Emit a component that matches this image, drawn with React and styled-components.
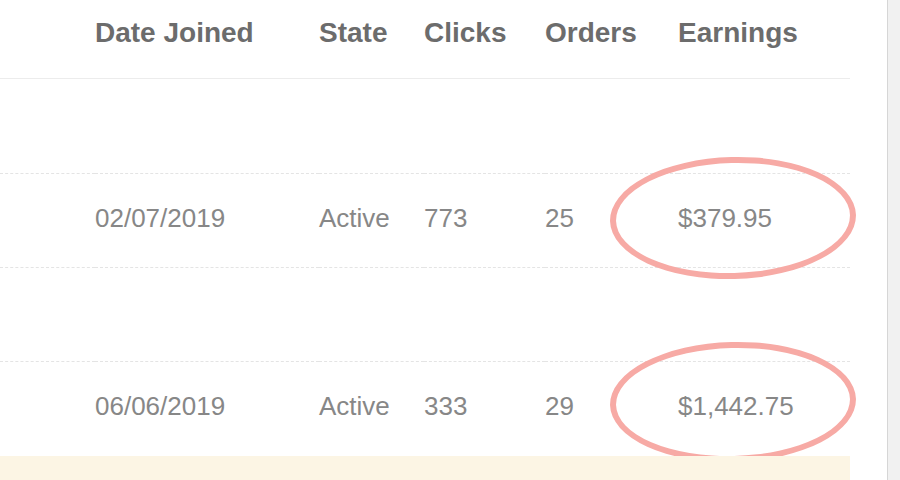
import React from "react";
import styled, { createGlobalStyle } from "styled-components";

const Global = createGlobalStyle`
  html, body { margin: 0; padding: 0; background: #fff; }
  body { font-family: "Liberation Sans", Arial, sans-serif; overflow: hidden; }
`;

const Page = styled.div`
  display: flex;
  width: 900px;
  height: 480px;
  overflow: hidden;
`;

const Main = styled.div`
  flex: 1;
  padding-right: 37px;
  background: #fff;
`;

const Scrollbar = styled.div`
  width: 12px;
  border-left: 1px solid #d6d6d6;
  background: #f1f1f1;
`;

const Table = styled.div`
  width: 850px;
  display: grid;
  grid-template-columns: 95px 224px 105px 121px 133px 1fr;
`;

const HeadCell = styled.div`
  box-sizing: border-box;
  height: 79px;
  padding-top: 17px;
  border-bottom: 1px solid #ececec;
  font-size: 28px;
  line-height: 32px;
  font-weight: 700;
  color: #6c6c6c;
  white-space: nowrap;
`;

const Cell = styled.div`
  position: relative;
  box-sizing: border-box;
  height: ${(p) => p.$h}px;
  padding-top: 29px;
  font-size: 26px;
  line-height: 30px;
  color: #878787;
  white-space: nowrap;
  border-bottom: ${(p) => (p.$last ? "none" : "1px dashed #e4e4e4")};
  background: ${(p) => (p.$hl ? "#fcf5e4" : "transparent")};
`;

const Circle = styled.span`
  position: absolute;
  left: -68px;
  top: ${(p) => p.$top}px;
  width: 246px;
  height: ${(p) => p.$height}px;
  box-sizing: border-box;
  border: 6px solid #f7aaa5;
  border-radius: 50%;
  transform: rotate(-1.5deg);
  pointer-events: none;
`;

const headers = ["", "Date Joined", "State", "Clicks", "Orders", "Earnings"];

const rows = [
  { h: 95, cells: null },
  { h: 94, cells: ["02/07/2019", "Active", "773", "25", "$379.95"], circle: { top: -17, height: 122 } },
  { h: 94, cells: null },
  { h: 94, cells: ["06/06/2019", "Active", "333", "29", "$1,442.75"], circle: { top: -20, height: 120 }, last: true },
  { h: 40, cells: null, hl: true, last: true },
];

export default function App() {
  return (
    <Page>
      <Global />
      <Main>
        <Table>
          {headers.map((h, i) => (
            <HeadCell key={"h" + i}>{h}</HeadCell>
          ))}
          {rows.map((r, ri) =>
            [null, ...(r.cells || ["", "", "", "", ""])].map((c, ci) => (
              <Cell key={ri + "-" + ci} $h={r.h} $last={r.last} $hl={r.hl}>
                {c}
                {ci === 5 && r.circle && (
                  <Circle $top={r.circle.top} $height={r.circle.height} />
                )}
              </Cell>
            ))
          )}
        </Table>
      </Main>
      <Scrollbar />
    </Page>
  );
}
